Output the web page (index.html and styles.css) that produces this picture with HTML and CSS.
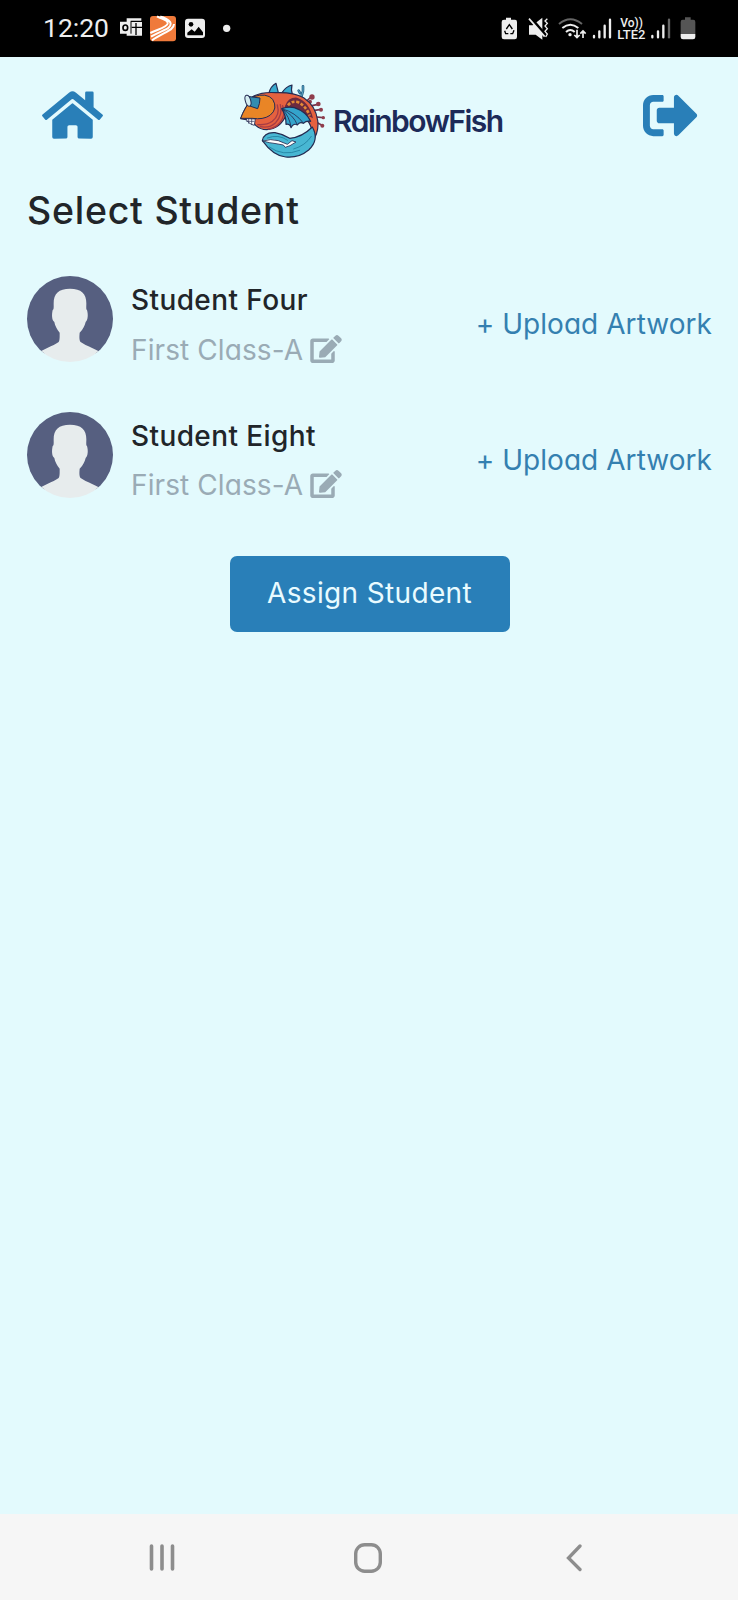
FILE: index.html
```html
<!DOCTYPE html>
<html lang="en">
<head>
<meta charset="utf-8">
<title>RainbowFish</title>
<link rel="stylesheet" href="styles.css">
</head>
<body>
<svg class="defs" width="0" height="0">
  <defs>
    <symbol id="edit" viewBox="0 0 576 512"><path fill="currentColor" d="M402.6 83.2l90.2 90.2c3.8 3.8 3.8 10 0 13.8L274.4 405.6l-92.8 10.3c-12.4 1.4-22.9-9.1-21.5-21.5l10.3-92.8L388.8 83.2c3.8-3.8 10-3.8 13.8 0zm162-22.9l-48.8-48.8c-15.2-15.2-39.9-15.2-55.2 0l-35.4 35.4c-3.8 3.8-3.8 10 0 13.8l90.2 90.2c3.8 3.8 10 3.8 13.8 0l35.4-35.4c15.2-15.3 15.2-40 0-55.2zM384 346.2V448H64V128h229.8c3.2 0 6.2-1.3 8.5-3.5l40-40c7.6-7.6 2.2-20.5-8.5-20.5H48C21.5 64 0 85.5 0 112v352c0 26.5 21.5 48 48 48h352c26.5 0 48-21.5 48-48V306.2c0-10.7-12.9-16-20.5-8.5l-40 40c-2.2 2.3-3.5 5.3-3.5 8.5z"/></symbol>
    <clipPath id="disc"><circle cx="129" cy="129" r="129"/></clipPath>
    <symbol id="avatar" viewBox="0 0 258 258">
      <g clip-path="url(#disc)">
        <rect width="258" height="232" fill="#565f80"/>
        <path fill="#e7eced" d="M30 236C45 219 80 210 94 199C99 194 98 181 98 170C89 159 84 149 82 138C74 132 74 115 77 102C81 102 80 92 80 82C80 53 95 38 129 38C163 38 178 53 178 82C178 92 177 102 180 102C184 115 183 132 176 138C173 149 169 159 158 170C157 181 156 194 162 199C176 210 211 219 228 236V258H30Z"/>
      </g>
    </symbol>
  </defs>
</svg>
<div class="screen">
  <div class="status">
    <span class="clock">12:20</span>
    <svg class="notifications" width="116" height="30" viewBox="0 0 348 90">
      <path fill="#eee" d="M23 10H67V19H69V62H23V56H3V20H23Z"/>
      <path stroke="#000" stroke-width="4" fill="none" d="M35 19H69M38 37H69M51 24V60"/>
      <path stroke="#000" stroke-width="3" fill="none" d="M36 20V56"/>
      <ellipse cx="19" cy="38" rx="7" ry="8" fill="none" stroke="#000" stroke-width="5"/>
      <rect x="93" y="3" width="78" height="76" rx="9" fill="#ef7a3b"/>
      <path fill="none" stroke="#fff" stroke-width="6" d="M94 54C122 41 144 36 146 26C148 14 130 14 114 4M96 65C130 45 156 42 155 26C154 14 138 10 124 4M99 76C132 52 165 47 165 27"/>
      <rect x="198" y="11" width="60" height="58" rx="9" fill="#eee"/>
      <circle cx="216" cy="28" r="7" fill="#000"/>
      <path fill="#000" d="M205 61V53L218 43L227 50L239 35L252 52V61Z"/>
      <circle cx="323" cy="40" r="11" fill="#eee"/>
    </svg>
    <svg class="indicators" width="198" height="30" viewBox="0 0 594 90">
      <path fill="#eee" d="M18 8H33V14H45Q51 14 51 21V66Q51 73 44 73H12Q5 73 5 66V21Q5 14 12 14H18Z"/>
      <path fill="none" stroke="#000" stroke-width="4" d="M19 42L28 29L37 42M42 46L38 56H31M25 56H17L14 47"/>
      <path fill="#eee" d="M87 31H98L127 8V74L107 59H87Z"/>
      <path stroke="#000" stroke-width="9" d="M87 3L137 61"/><path stroke="#eee" stroke-width="5" d="M87 11L134 65"/>
      <path fill="none" stroke="#eee" stroke-width="4" d="M142 11L135 18L142 25L135 33L142 41L135 49L142 57L137 66"/>
      <path fill="none" stroke="#666" stroke-width="6" d="M177 27Q211 -2 246 27"/>
      <path fill="none" stroke="#eee" stroke-width="6" d="M187 39Q211 19 235 39M198 51Q211 39 224 51"/>
      <circle cx="210" cy="59" r="5" fill="#eee"/>
      <path fill="none" stroke="#eee" stroke-width="5" d="M231 44V68M223 60L231 68L239 60M249 69V48M241 56L249 48L257 56"/>
      <path stroke="#eee" stroke-width="7" stroke-linecap="round" d="M282 63V67M298 49V67M314 32V67M330 14V67M457 63V67M474 49V67M490 32V67"/>
      <path stroke="#666" stroke-width="7" stroke-linecap="round" d="M507 14V67"/>
      <text class="volte" x="361" y="37" textLength="68" lengthAdjust="spacingAndGlyphs">Vo))</text>
      <text class="volte" x="352" y="72" textLength="84" lengthAdjust="spacingAndGlyphs">LTE2</text>
      <path fill="#555" d="M555 7H572V14H580Q586 14 586 21V57H542V21Q542 14 548 14H555Z"/>
      <path fill="#eee" d="M542 57H586V66Q586 73 579 73H549Q542 73 542 66Z"/>
    </svg>
  </div>

  <div class="header">
    <svg class="home" width="61" height="54" viewBox="0 0 576 512"><path fill="currentColor" d="M280.37 148.26L96 300.11V464a16 16 0 0 0 16 16l112.06-.29a16 16 0 0 0 15.92-16V368a16 16 0 0 1 16-16h64a16 16 0 0 1 16 16v95.64a16 16 0 0 0 16 16.05L464 480a16 16 0 0 0 16-16V300L295.67 148.26a12.19 12.19 0 0 0-15.3 0zM571.6 251.47L488 182.56V44.05a12 12 0 0 0-12-12h-56a12 12 0 0 0-12 12v72.61L318.47 43a48 48 0 0 0-61 0L4.34 251.47a12 12 0 0 0-1.6 16.9l25.5 31A12 12 0 0 0 45.15 301l235.22-193.74a12.19 12.19 0 0 1 15.3 0L530.9 301a12 12 0 0 0 16.9-1.6l25.5-31a12 12 0 0 0-1.7-16.93z"/></svg>
    <div class="logo">
      <svg class="fish" width="110" height="90" viewBox="0 0 330 270" stroke="#242b52" stroke-width="3.500" stroke-linejoin="round" stroke-linecap="round">
        <path fill="#39a9cd" d="M117 54Q122 34 138 25Q142 40 145 53ZM156 53Q168 34 186 30Q182 44 188 61Z"/>
        <path fill="none" stroke="#2b6286" stroke-width="8" d="M214 66L219 48M206 47L210 54M219 34V46"/>
        <path fill="none" stroke="#5aa9c9" stroke-width="3" d="M214 66L219 48M206 47L210 54M219 34V46"/>
        <path fill="none" stroke="#75354c" stroke-width="5" d="M228 80L243 66M246 92L264 88M254 106L274 103M259 126L280 128M259 142L279 152"/>
        <g fill="#8f3d4c" stroke="none"><circle cx="246" cy="66" r="8"/><circle cx="265" cy="87" r="7"/><circle cx="240" cy="80" r="6"/><circle cx="273" cy="104" r="6"/><circle cx="280" cy="128" r="5"/><circle cx="277" cy="152" r="6"/></g>
        <path fill="#e5613f" d="M68 65Q94 50 137 53Q190 51 221 68Q257 92 263 136Q268 171 247 199Q250 165 237 143Q225 125 170 118Q150 163 110 164Q91 164 77 151L65 137L32 131Q43 101 68 65Z"/>
        <path fill="#6c2a3f" stroke="none" d="M165 93Q175 66 201 68Q238 80 249 130Q227 115 163 104Z"/>
        <path fill="none" stroke="#e38a36" stroke-width="8" stroke-linecap="butt" stroke-dasharray="9 5" d="M174 91Q185 77 203 81Q229 94 239 122"/>
        <path fill="none" stroke="#a63c45" stroke-width="4" d="M151 89Q159 119 137 143Q119 160 91 155M158 92Q168 120 149 144Q136 159 115 162M142 90Q151 120 127 139Q111 151 83 149"/>
        <path fill="#e98526" stroke-width="3" d="M70 65Q110 52 128 73Q145 101 120 121Q99 135 67 130L32 130Q42 101 70 65Z"/>
        <path fill="#fff" stroke-width="2.500" d="M48 131L76 132L73 151Q53 146 48 131Z"/>
        <path fill="none" stroke-width="2" d="M50 139H72M56 132V145M65 132V149"/>
        <path fill="#328db1" stroke-width="3" d="M52 64L90 69Q90 86 83 101L59 93Z"/>
        <ellipse cx="54" cy="77" rx="8" ry="17" transform="rotate(-16 54 77)" stroke-width="3" fill="#d4edf1"/>
        <path fill="#34a4cc" d="M155 101Q175 94 193 98Q229 110 242 139Q229 136 220 145Q209 139 202 150Q191 143 183 158Q180 145 168 148Q169 123 155 101Z"/>
        <path fill="none" stroke-width="2.500" d="M158 102Q196 112 220 144M158 103Q190 120 202 149M158 104Q178 124 183 155"/>
        <path fill="#48b7d3" d="M97 197Q102 171 135 173Q159 177 179 190Q216 187 247 156Q269 194 236 225Q206 250 167 246Q130 243 97 197Z"/>
        <path fill="#fff" stroke-width="2.500" d="M99 198Q122 190 145 197L172 208L186 197L198 201L180 212L166 217L160 210L138 206Q117 204 99 198Z"/>
        <path fill="none" stroke="#217f9f" stroke-width="2.500" d="M118 216Q159 246 209 226M112 189Q145 176 173 196M191 222Q226 212 244 184"/>
      </svg>
      <span class="wordmark">RainbowFish</span>
    </div>
    <svg class="logout" width="55" height="55" viewBox="0 0 512 512"><path fill="currentColor" d="M497 273L329 441c-15 15-41 4.500-41-17v-96H152c-13.300 0-24-10.700-24-24v-96c0-13.300 10.700-24 24-24h136V88c0-21.400 25.900-32 41-17l168 168c9.300 9.400 9.300 24.600 0 34zM192 436v-40c0-6.600-5.400-12-12-12H96c-17.700 0-32-14.300-32-32V160c0-17.700 14.300-32 32-32h84c6.600 0 12-5.400 12-12V76c0-6.600-5.400-12-12-12H96c-53 0-96 43-96 96v192c0 53 43 96 96 96h84c6.600 0 12-5.400 12-12z"/></svg>
  </div>

  <div class="content">
    <h1 class="title">Select Student</h1>
    <div class="student">
      <svg class="avatar" width="86" height="86"><use href="#avatar"/></svg>
      <div class="info">
        <div class="name">Student Four</div>
        <div class="class"><span class="class-name">First Class-A</span><svg class="edit" width="32" height="28"><use href="#edit"/></svg></div>
      </div>
      <a class="upload">+ Upload Artwork</a>
    </div>
    <div class="student">
      <svg class="avatar" width="86" height="86"><use href="#avatar"/></svg>
      <div class="info">
        <div class="name">Student Eight</div>
        <div class="class"><span class="class-name">First Class-A</span><svg class="edit" width="32" height="28"><use href="#edit"/></svg></div>
      </div>
      <a class="upload">+ Upload Artwork</a>
    </div>
    <button class="assign">Assign Student</button>
  </div>

  <div class="navbar">
    <svg width="26" height="28" viewBox="0 0 26 28" fill="none" stroke="#8d8d8d" stroke-width="3.600" stroke-linecap="round"><path d="M2.500 2V25M13 2V25M23.500 2V25"/></svg>
    <svg class="nav-home" width="28" height="30" viewBox="0 0 28 30" fill="none" stroke="#8d8d8d" stroke-width="3.400"><rect x="1.700" y="1.700" width="24.600" height="26.600" rx="9"/></svg>
    <svg width="16" height="28" viewBox="0 0 16 28" fill="none" stroke="#8d8d8d" stroke-width="3.300" stroke-linecap="round"><path d="M14 2L2.500 14L14 25.500"/></svg>
  </div>
</div>
</body>
</html>
```
FILE: styles.css
```css
body {
  margin: 0;
  font-family: Inter, "Open Sans", sans-serif;
  font-feature-settings: "cv11";
}
.defs { position: absolute; }
.screen {
  display: flex;
  flex-direction: column;
  width: 738px;
  height: 1600px;
  background: #e3fafd;
}
.status {
  display: flex;
  box-sizing: border-box;
  height: 57px;
  padding: 15px 40px 0 43px;
  background: #000;
}
.clock {
  width: 76px;
  font: 26.500px/26px Roboto, sans-serif;
  color: #eee;
}
.indicators { margin-left: auto; }
.notifications, .indicators { display: block; }
.volte {
  font: 500 36px Roboto, sans-serif;
  fill: #eee;
}
.header {
  display: flex;
  align-items: center;
  height: 116px;
  padding: 0 40px 0 42px;
  color: #297fb8;
}
.logo {
  display: flex;
  align-items: center;
  margin-left: 127px;
  padding-top: 10px;
}
.wordmark {
  margin: 2px 0 0 -7px;
  font-size: 30px;
  line-height: 40px;
  font-weight: 600;
  letter-spacing: -1.5px;
  color: #1c2a59;
}
.logout { margin-left: auto; }
.content {
  display: flex;
  flex: 1;
  flex-direction: column;
  padding: 0 26px 0 27px;
}
.title {
  margin: 13px 0 40px;
  font-size: 37.500px;
  line-height: 50px;
  font-weight: 500;
  letter-spacing: 0.75px;
  color: #212529;
}
.student {
  display: flex;
  align-items: center;
  height: 96px;
  margin-bottom: 39.500px;
}
.avatar { margin-bottom: 10px; }
.info { margin-left: 18px; }
.name {
  padding-top: 1px;
  font-size: 28px;
  line-height: 48px;
  font-weight: 500;
  letter-spacing: 0.4px;
  white-space: nowrap;
  color: #212529;
}
.class {
  display: flex;
  align-items: center;
  height: 49px;
  color: #9aabb5;
}
.class-name {
  padding-top: 2px;
  font-size: 28px;
  letter-spacing: 0.1px;
  white-space: nowrap;
}
.edit { margin-left: 7px; }
.upload {
  margin-left: auto;
  font-size: 28px;
  letter-spacing: 0.05px;
  white-space: nowrap;
  color: #3480b0;
}
.assign {
  align-self: center;
  width: 280px;
  height: 76px;
  margin-top: 9px;
  padding-bottom: 4px;
  border: 0;
  border-radius: 7px;
  background: #297fb8;
  color: #e9fbff;
  font: 28px Inter, sans-serif;
  font-feature-settings: "cv11";
  letter-spacing: 0.35px;
}
.navbar {
  display: flex;
  align-items: center;
  justify-content: space-between;
  box-sizing: border-box;
  height: 86px;
  padding: 2px 156px 0 149px;
  background: #f6f6f6;
}
.nav-home { margin-right: 5px; }
```
